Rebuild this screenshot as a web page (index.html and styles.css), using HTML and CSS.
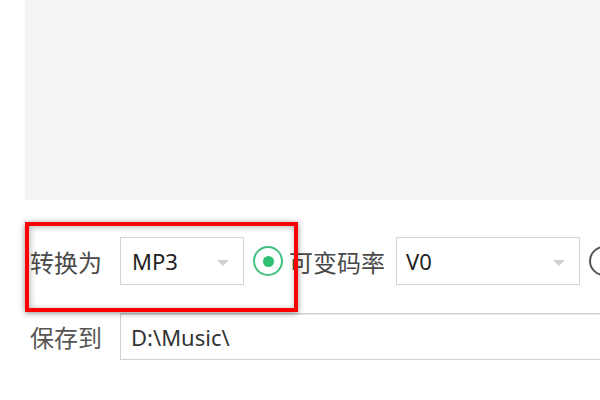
FILE: index.html
```html
<!DOCTYPE html>
<html lang="zh">

<head>
    <meta charset="UTF-8">
    <title>格式转换</title>
    <link rel="stylesheet" href="styles.css">
</head>

<body>
    <div class="preview"></div>

    <div class="settings">
        <div class="row">
            <span class="label">转换为</span>
            <div class="select select-format">
                <span class="value">MP3</span>
                <span class="caret"></span>
            </div>
            <span class="radio checked"></span>
            <span class="option">可变码率</span>
            <div class="select select-quality">
                <span class="value">V0</span>
                <span class="caret"></span>
            </div>
            <span class="radio"></span>
        </div>

        <div class="row row-save">
            <span class="label label-save">保存到</span>
            <div class="path">D:\Music\</div>
        </div>

        <!-- annotation frame -->
        <div class="highlight"></div>
    </div>
</body>

</html>
```
FILE: styles.css
```css
html, body {
    margin: 0;
    padding: 0;
    background-color: #fff;
    overflow: hidden;
}

body {
    width: 600px;
    height: 400px;
    font-family: 'Noto Sans', 'Noto Sans CJK SC', sans-serif;
    color: #333;
}

.preview {
    margin-left: 25px;
    height: 200px;
    background-color: #f4f4f4;
}

.settings {
    position: relative;
    padding-left: 30px;
    padding-top: 37px;
}

.row {
    display: flex;
    align-items: center;
    height: 48px;
    white-space: nowrap;
}

.row-save {
    margin-top: 28px;
    height: 47px;
}

.label {
    width: 90px;
    flex-shrink: 0;
    font-family: 'Noto Sans CJK SC', sans-serif;
    font-size: 24px;
    color: #4a4a4a;
}

.label-save {
    color: #555;
}

.select {
    position: relative;
    flex-shrink: 0;
    box-sizing: border-box;
    height: 48px;
    border: 1px solid #d4d4d4;
    background-color: #fff;
    display: flex;
    align-items: center;
    padding-left: 11px;
    font-size: 22px;
    color: #222;
}

.select-format {
    width: 124px;
}

.select-quality {
    width: 184px;
    padding-left: 9px;
}

.caret {
    position: absolute;
    right: 14px;
    top: 22px;
    width: 0;
    height: 0;
    border-left: 6px solid transparent;
    border-right: 6px solid transparent;
    border-top: 6px solid #cfcfcf;
}

.radio {
    flex-shrink: 0;
    box-sizing: border-box;
    width: 30px;
    height: 30px;
    margin-left: 9px;
    border: 2.5px solid #3fc17e;
    border-radius: 50%;
    display: flex;
    align-items: center;
    justify-content: center;
}

.radio:last-child {
    border-color: #555;
}

.radio.checked::after {
    content: "";
    width: 11px;
    height: 11px;
    border-radius: 50%;
    background-color: #2fbf72;
}

.option {
    margin-left: 6px;
    margin-right: 11px;
    font-family: 'Noto Sans CJK SC', sans-serif;
    font-size: 24px;
    color: #4a4a4a;
}

.path {
    flex-shrink: 0;
    box-sizing: border-box;
    width: 500px;
    height: 47px;
    border: 1px solid #cdd1d6;
    box-shadow: inset 0 1px 0 #e4e7ea;
    display: flex;
    align-items: center;
    padding-left: 10px;
    font-size: 22px;
    color: #333;
}

.highlight {
    position: absolute;
    left: 25px;
    top: 22px;
    width: 273px;
    height: 90px;
    box-sizing: border-box;
    border: 4px solid #ff0000;
    box-shadow: 0 1px 6px rgba(0, 0, 0, 0.45), inset 1px 1px 6px rgba(0, 0, 0, 0.3);
}
```
